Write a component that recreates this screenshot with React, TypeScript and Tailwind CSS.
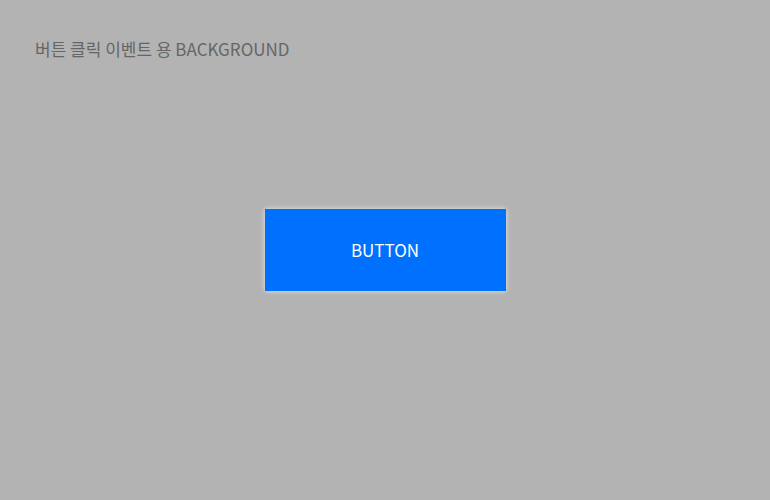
import React from "react";

export default function App() {
  return (
    <div
      className="grid h-[500px] w-[770px] bg-[#b3b3b3]"
      style={{ fontFamily: '"Noto Sans CJK KR", sans-serif' }}
    >
      <div className="col-start-1 row-start-1 self-start pl-[35px] pt-[37px] text-[17px] leading-[24px] text-[#666666]">
        버튼 클릭 이벤트 용 BACKGROUND
      </div>
      <button
        type="button"
        className="col-start-1 row-start-1 place-self-center flex h-[82px] w-[241px] items-center justify-center bg-[#0070ff] text-[17px] text-white shadow-[0_0_5px_rgba(255,255,255,0.7)]"
      >
        BUTTON
      </button>
    </div>
  );
}
